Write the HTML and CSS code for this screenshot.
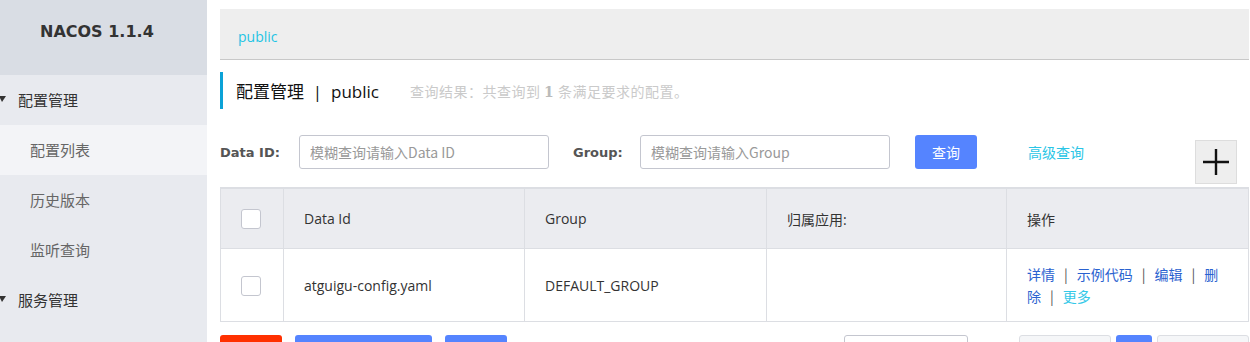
FILE: index.html
```html
<!DOCTYPE html>
<html lang="zh-CN">
<head>
    <meta charset="UTF-8">
    <meta name="viewport" content="width=device-width, initial-scale=1.0">
    <title>Nacos - 配置列表</title>
    <link rel="stylesheet" href="styles.css">
</head>
<body>
    <div class="layout">
        <aside class="sidebar">
            <div class="brand">NACOS 1.1.4</div>
            <ul class="menu">
                <li class="menu-group"><span class="caret"></span>配置管理</li>
                <li class="menu-item active">配置列表</li>
                <li class="menu-item">历史版本</li>
                <li class="menu-item">监听查询</li>
                <li class="menu-group"><span class="caret"></span>服务管理</li>
            </ul>
        </aside>

        <main class="main">
            <div class="namespace-bar">
                <a class="ns-link" href="#">public</a>
            </div>

            <div class="page-title">
                <span class="title-text">配置管理 &nbsp;|&nbsp; public</span>
                <span class="title-desc">查询结果：共查询到 <strong>1</strong> 条满足要求的配置。</span>
            </div>

            <div class="search-row">
                <label class="field-label" for="data-id">Data ID:</label>
                <input class="field-input" type="text" id="data-id" placeholder="模糊查询请输入Data ID">
                <label class="field-label group-label" for="group">Group:</label>
                <input class="field-input" type="text" id="group" placeholder="模糊查询请输入Group">
                <button class="btn-primary search-btn">查询</button>
                <a class="adv-link" href="#">高级查询</a>
                <button class="add-btn">
                    <svg width="28" height="28" viewBox="0 0 28 28"><path d="M14 1V27M1 14H27" stroke="#111" stroke-width="2.4"/></svg>
                </button>
            </div>

            <table class="config-table">
                <colgroup>
                    <col style="width: 63px">
                    <col style="width: 241px">
                    <col style="width: 242px">
                    <col style="width: 240px">
                    <col>
                </colgroup>
                <thead>
                    <tr>
                        <th class="check-cell"><span class="checkbox"></span></th>
                        <th>Data Id</th>
                        <th>Group</th>
                        <th>归属应用:</th>
                        <th>操作</th>
                    </tr>
                </thead>
                <tbody>
                    <tr>
                        <td class="check-cell"><span class="checkbox"></span></td>
                        <td>atguigu-config.yaml</td>
                        <td>DEFAULT_GROUP</td>
                        <td></td>
                        <td class="ops"><a href="#">详情</a><span class="sep">|</span><a href="#">示例代码</a><span class="sep">|</span><a href="#">编辑</a><span class="sep">|</span><a href="#">删除</a><span class="sep">|</span><a class="more" href="#">更多</a></td>
                    </tr>
                </tbody>
            </table>

            <div class="footer-row">
                <button class="btn-danger w62"></button>
                <button class="btn-primary w137"></button>
                <button class="btn-primary w62"></button>
                <div class="spacer"></div>
                <div class="page-size"></div>
                <div class="pager">
                    <button class="page-btn prev"></button>
                    <button class="page-btn current"></button>
                    <button class="page-btn next"></button>
                </div>
            </div>
        </main>
    </div>
</body>
</html>
```

FILE: styles.css
```css
body {
    margin: 0;
    font-family: "Liberation Sans", "Noto Sans CJK SC", sans-serif;
    font-size: 14px;
    color: #333;
    background: #fff;
    overflow: hidden;
}
.layout {
    display: flex;
    min-height: 342px;
}
.sidebar {
    width: 207px;
    flex-shrink: 0;
    background-color: #e8eaef;
}
.brand {
    height: 75px;
    background-color: #d9dde4;
    font-family: "DejaVu Sans", sans-serif;
    font-weight: bold;
    font-size: 16px;
    color: #333;
    display: flex;
    align-items: center;
    padding-left: 40px;
    padding-bottom: 12px;
    box-sizing: border-box;
}
.menu {
    list-style: none;
    margin: 0;
    padding: 0;
}
.menu-group, .menu-item {
    height: 50px;
    display: flex;
    align-items: center;
    padding-bottom: 2px;
    box-sizing: border-box;
    font-family: "Noto Sans CJK SC", sans-serif;
}
.menu-group {
    font-size: 15px;
    color: #333;
}
.caret {
    width: 0;
    height: 0;
    border-left: 3px solid transparent;
    border-right: 4px solid transparent;
    border-top: 6px solid #333;
    margin-right: 12px;
    margin-left: -1px;
}
.menu-item {
    font-size: 15px;
    color: #666;
    padding-left: 30px;
}
.menu-item.active {
    background-color: #f3f4f7;
}
.main {
    flex: 1;
    padding: 9px 1px 0 13px;
    min-width: 0;
}
.namespace-bar {
    height: 51px;
    background-color: #eee;
    border-bottom: 1px solid #c8c8c8;
    display: flex;
    align-items: center;
    padding-left: 18px;
    padding-top: 4px;
    box-sizing: border-box;
}
.ns-link {
    color: #1ec4e4;
    text-decoration: none;
    font-family: "Open Sans", sans-serif;
    font-size: 14px;
}
.page-title {
    margin-top: 12px;
    height: 37px;
    border-left: 3px solid #0ba2d7;
    display: flex;
    align-items: center;
    padding-left: 13px;
}
.title-text {
    font-size: 17px;
    color: #111;
    font-family: "Open Sans", "Noto Sans CJK SC", sans-serif;
}
.title-desc {
    margin-left: 31px;
    font-size: 14px;
    letter-spacing: 0.5px;
    color: #cacaca;
    font-family: "Noto Sans CJK SC", sans-serif;
}
.title-desc strong {
    font-family: "DejaVu Serif", serif;
    color: #bbb;
}
.search-row {
    margin-top: 26px;
    display: flex;
    align-items: flex-start;
    padding-right: 12px;
}
.field-label {
    font-family: "DejaVu Sans", sans-serif;
    font-weight: bold;
    font-size: 13px;
    color: #555;
    height: 34px;
    line-height: 36px;
    width: 79px;
}
.group-label {
    margin-left: 24px;
    width: 67px;
}
.field-input {
    width: 250px;
    height: 34px;
    box-sizing: border-box;
    border: 1px solid #c4c6cf;
    border-radius: 3px;
    padding: 0 10px;
    font-family: "Noto Sans CJK SC", sans-serif;
    font-size: 14px;
    outline: none;
}
.field-input::placeholder {
    color: #999;
}
.btn-primary {
    background-color: #5584ff;
    color: #fff;
    border: none;
    border-radius: 3px;
}
.btn-danger {
    background-color: #ff3000;
    border: none;
    border-radius: 3px;
}
.search-btn {
    margin-left: 25px;
    width: 62px;
    height: 34px;
    font-family: "Noto Sans CJK SC", sans-serif;
    font-size: 14px;
}
.adv-link {
    margin-left: 51px;
    line-height: 34px;
    color: #29c5e6;
    text-decoration: none;
    font-family: "Noto Sans CJK SC", sans-serif;
}
.add-btn {
    margin-left: auto;
    margin-top: 5px;
    width: 42px;
    height: 44px;
    background-color: #eee;
    border: 1px solid #ddd;
    padding: 0;
    display: flex;
    align-items: center;
    justify-content: center;
}
.config-table {
    margin-top: 3px;
    width: 100%;
    border-collapse: collapse;
    table-layout: fixed;
    border: 1px solid #dcdee3;
    border-top: 2px solid #dcdee3;
}
.config-table th,
.config-table td {
    border-left: 1px solid #dcdee3;
    text-align: left;
    padding: 0 21px 0 20px;
    font-weight: normal;
    font-family: "Open Sans", "Noto Sans CJK SC", sans-serif;
    font-size: 14px;
    color: #333;
}
.config-table th {
    height: 59px;
    background-color: #ebecf0;
    border-bottom: 1px solid #dcdee3;
}
.config-table td {
    height: 72px;
}
.check-cell {
    text-align: center !important;
    padding: 0 3px 0 0 !important;
}
.checkbox {
    display: inline-block;
    width: 18px;
    height: 18px;
    border: 1px solid #c4c6cf;
    border-radius: 3px;
    background: #fff;
    vertical-align: middle;
}
.config-table td.ops {
    padding: 0 22px 0 20px;
    line-height: 22px;
    font-family: "Noto Sans CJK SC", sans-serif;
}
.ops a {
    color: #2a62d0;
    text-decoration: none;
}
.ops a.more {
    color: #33c8e8;
}
.sep {
    display: inline-block;
    color: #555;
    margin: 0 9px;
}
.footer-row {
    margin-top: 13px;
    display: flex;
    align-items: flex-start;
    height: 34px;
}
.footer-row button {
    height: 34px;
    margin-right: 13px;
}
.w62 {
    width: 62px;
}
.w137 {
    width: 137px;
}
.spacer {
    flex: 1;
}
.page-size {
    width: 124px;
    height: 34px;
    box-sizing: border-box;
    border: 1px solid #c4c6cf;
    border-radius: 3px;
    margin-right: 51px;
}
.pager {
    display: flex;
    gap: 5px;
}
.pager .page-btn {
    margin-right: 0;
    border-radius: 3px;
}
.page-btn.prev, .page-btn.next {
    width: 92px;
    background-color: #f5f6f8;
    border: 1px solid #dcdee3;
}
.page-btn.current {
    width: 36px;
    background-color: #5584ff;
    border: none;
}
```
